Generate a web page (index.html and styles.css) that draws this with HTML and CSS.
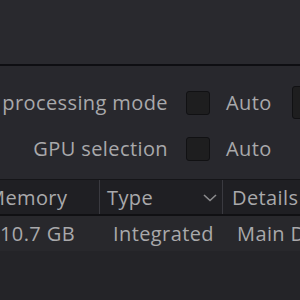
FILE: index.html
```html
<!DOCTYPE html>
<html lang="en">
  <head>
    <meta charset="UTF-8" />
    <title>Memory and GPU</title>
    <link rel="stylesheet" href="styles.css">
  </head>
  <body>
    <div class="toolbar"></div>

    <div class="panel">
      <div class="form">
        <div class="form-row">
          <div class="label">GPU processing mode</div>
          <span class="check"></span>
          <span class="value">Auto</span>
          <span class="select"></span>
        </div>
        <div class="form-row">
          <div class="label">GPU selection</div>
          <span class="check"></span>
          <span class="value">Auto</span>
        </div>
      </div>

      <div class="table">
        <div class="thead">
          <div class="th col-mem">Memory</div>
          <div class="th col-type">
            Type
            <svg class="chev" width="14" height="8" viewBox="0 0 14 8">
              <path d="M1 1 L7 6.5 L13 1" fill="none" stroke="#8c8c8e" stroke-width="1.6" />
            </svg>
          </div>
          <div class="th col-details">Details</div>
        </div>
        <div class="tr">
          <div class="td col-mem">10.7 GB</div>
          <div class="td col-type">Integrated</div>
          <div class="td col-details">Main Display</div>
        </div>
      </div>
    </div>
  </body>
</html>
```

FILE: styles.css
```css
body {
  margin: 0;
  width: 300px;
  height: 300px;
  overflow: hidden;
  background: #242428;
  font-family: "Open Sans", "Noto Sans", sans-serif;
  font-size: 20px;
  letter-spacing: 0.4px;
  color: #a9a9ab;
}
.toolbar {
  height: 64px;
  background: #29292e;
  border-bottom: 2px solid #0e0e12;
}
.panel {
  padding-top: 24px;
  background: #28282d;
}
.form {
  display: flex;
  flex-direction: column;
  gap: 21px;
  padding-bottom: 18px;
}
.form-row {
  display: flex;
  align-items: center;
  height: 25px;
}
.label {
  width: 168px;
  flex-shrink: 0;
  display: flex;
  justify-content: flex-end;
  white-space: nowrap;
}
.check {
  width: 22px;
  height: 22px;
  margin-left: 18px;
  flex-shrink: 0;
  background: #1e1e1f;
  border: 1px solid #111113;
  border-radius: 3px;
}
.value {
  margin-left: 16px;
  white-space: nowrap;
}
.select {
  width: 30px;
  height: 31px;
  margin-left: 20px;
  flex-shrink: 0;
  background: #1e1e1f;
  border: 1px solid #111113;
  border-radius: 3px;
}
.table {
  margin-left: -20px;
  background: #242428;
}
.thead {
  display: flex;
  height: 34px;
  background: #1f1f23;
  border-top: 1px solid #151518;
  border-bottom: 2px solid #101013;
}
.tr {
  display: flex;
  height: 35px;
  background: #28282c;
}
.th, .td {
  box-sizing: border-box;
  display: flex;
  align-items: center;
  white-space: nowrap;
  flex-shrink: 0;
}
.th {
  padding-left: 7px;
  border-right: 1px solid #3a3a40;
}
.td {
  padding-left: 13px;
}
.td.col-mem {
  padding-left: 20px;
}
.col-mem {
  width: 120px;
}
.col-type {
  width: 123px;
}
.col-details {
  width: 140px;
}
.th.col-details {
  padding-left: 9px;
}
.td.col-details {
  padding-left: 14px;
}
.th.col-type {
  justify-content: space-between;
  padding-right: 5px;
}
.chev {
  margin-top: 2px;
}
```
